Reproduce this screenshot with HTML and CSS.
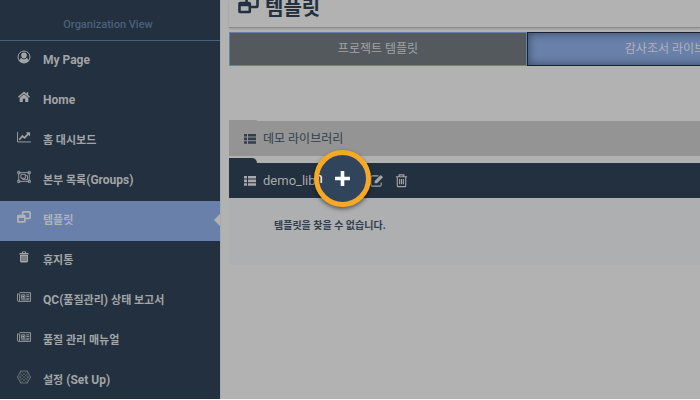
FILE: index.html
```html
<!DOCTYPE html>
<html lang="ko">
<head>
<meta charset="utf-8">
<title>템플릿</title>
<link rel="stylesheet" href="styles.css">
</head>
<body>
<svg class="defs" aria-hidden="true">
  <symbol id="windows" viewBox="0 0 16 14">
    <path d="M6.500 5V2q0-1 1-1H14q1 0 1 1v5.500q0 1-1 1h-4" fill="none" stroke="currentColor" stroke-width="2"/>
    <path fill-rule="evenodd" fill="currentColor" d="M1.500 4.500H8.500a1.500 1.500 0 0 1 1.500 1.500V12A1.500 1.500 0 0 1 8.500 13.500H1.500A1.500 1.500 0 0 1 0 12V6A1.500 1.500 0 0 1 1.500 4.500zM2 8v3.500h6V8z"/>
  </symbol>
  <symbol id="trash" viewBox="0 0 16 16">
    <path d="M2 4h12M5.500 4V2h5v2M3.500 4v9.500q0 1 1 1h7q1 0 1-1V4M6 6.500V12M8 6.500V12M10 6.500V12" fill="none" stroke="currentColor" stroke-width="1.200"/>
  </symbol>
  <symbol id="news" viewBox="0 0 16 14">
    <path d="M3 2h12.400v10H2Q.6 12 .6 10.500V3.500H3V10.500Q3 12 2 12M5 4.500h4v4H5zM10.500 4.500h3.500M10.500 6.500h3.500M10.500 8.500h3.500M5 10.300h9" fill="none" stroke="currentColor"/>
    <path d="M6 5.500h2v2H6z" fill="currentColor"/>
  </symbol>
  <symbol id="list" viewBox="0 0 12 10">
    <path d="M0 0h3v2.600H0zM4 0h8v2.600H4zM0 3.600h3v2.600H0zM4 3.600h8v2.600H4zM0 7.200h3v2.600H0zM4 7.200h8v2.600H4z" fill="currentColor"/>
  </symbol>
</svg>
<div class="app">
  <nav class="sidebar">
    <div class="brand">Organization View</div>
    <a class="item" href="#"><svg class="icon" viewBox="1 1 14 14"><circle cx="8" cy="8" r="6" fill="none" stroke="currentColor"/><path fill="currentColor" d="M8 3.500a2.800 2.800 0 0 1 2.800 3C10.800 8 9.700 9.500 8 9.500S5.200 8 5.200 6.500A2.800 2.800 0 0 1 8 3.500zM5.300 9Q8 11.500 10.700 9q2 .5 2.300 3Q11 14 8 14t-5-2q.3-2.500 2.300-3z"/></svg><span>My Page</span></a>
    <a class="item" href="#"><svg class="icon" viewBox="1 1 14 14"><path fill="currentColor" d="M8 5.200l4.300 3.600V13H9.200V9.800H6.800V13H3.700V8.800zM8 2.500l2.600 2.200V3.200h1.600v2.800L14 7.800l-.9 1L8 4.400 2.900 8.800 2 7.800z"/></svg><span>Home</span></a>
    <a class="item" href="#"><svg class="icon" viewBox="1 1 15 14"><path d="M1.600 2.500v10.800H16" fill="none" stroke="currentColor"/><path d="M3.500 11l3.300-4 2.300 2L13 4.700" fill="none" stroke="currentColor" stroke-width="1.800"/><path d="M10.500 3H15v4.500z" fill="currentColor"/></svg><span><span class="ko">홈 대시보드</span></span></a>
    <a class="item" href="#"><svg class="icon" viewBox="0 1 16 14"><path d="M2 3h12v10H2zM4.500 5h5v4.500h-5zM9.500 6.500h2.500v4.500H6.500V9.500" fill="none" stroke="currentColor"/><path d="M.7 1.600h2.600v2.600H.7zM12.700 1.600h2.600v2.600h-2.600zM.7 11.800h2.600v2.600H.7zM12.700 11.800h2.600v2.600h-2.600z" fill="none" stroke="currentColor" stroke-width=".9"/></svg><span><span class="ko">본부 목록</span>(Groups)</span></a>
    <a class="item active" href="#" aria-current="page"><svg class="icon"><use href="#windows"/></svg><span><span class="ko">템플릿</span></span></a>
    <a class="item" href="#"><svg class="icon" viewBox="1 1 14 14"><path fill="currentColor" fill-rule="evenodd" d="M6 2.500h4V4h2.500v1.500h-9V4H6zM7 3.300V4h2v-.7zM4 6h8v6q0 1.500-1.500 1.500h-5Q4 13.500 4 12zM5.700 7v5h.6V7zM7.700 7v5h.6V7zM9.700 7v5h.6V7z"/></svg><span><span class="ko">휴지통</span></span></a>
    <a class="item" href="#"><svg class="icon"><use href="#news"/></svg><span>QC(<span class="ko">품질관리</span>) <span class="ko">상태 보고서</span></span></a>
    <a class="item" href="#"><svg class="icon"><use href="#news"/></svg><span><span class="ko">품질 관리 매뉴얼</span></span></a>
    <a class="item" href="#"><svg class="icon dim" viewBox="1 1 14 14"><path d="M4.700 2h6.600L14.600 8l-3.300 6H4.700L1.400 8z" fill="none" stroke="currentColor" stroke-width=".9"/><path d="M4.500 2L8 5l3.500-3L12 8l-.5 6L8 11l-3.500 3L4 8zM1 8h3l4-3 4 3h3M4 8l4 3 4-3M5 5l6 6M11 5l-6 6" fill="none" stroke="currentColor" stroke-width=".5"/></svg><span><span class="ko">설정</span> (Set Up)</span></a>
  </nav>
  <main class="main">
    <header class="page-head"><svg class="head-icon"><use href="#windows"/></svg><h1>템플릿</h1></header>
    <div class="tabs">
      <button class="tab" type="button">프로젝트 템플릿</button>
      <button class="tab selected" type="button">감사조서 라이브러리</button>
    </div>
    <section class="library">
      <div class="row light"><svg class="list"><use href="#list"/></svg><span>데모 라이브러리</span></div>
    </section>
    <section class="library">
      <div class="row dark">
        <svg class="list"><use href="#list"/></svg><span>demo_lib</span>
        <div class="actions">
          <button class="tool" type="button" aria-label="편집"><svg viewBox="0 0 16 16"><path d="M10 3H3.500Q2 3 2 4.500v8Q2 14 3.500 14h8q1.500 0 1.500-1.500V10" fill="none" stroke="currentColor" stroke-width="1.200"/><path d="M6 8.500L12.500 2 15 4.500 8.500 11H6z" fill="currentColor"/></svg></button>
          <button class="tool" type="button" aria-label="삭제"><svg><use href="#trash"/></svg></button>
        </div>
        <button class="spotlight" type="button" aria-label="추가"><span class="peek">n</span><svg viewBox="0 0 16 16"><path d="M6.300 1h3.400v5.300H15v3.400H9.700V15H6.300V9.700H1V6.300h5.300z" fill="#fff"/></svg></button>
      </div>
      <p class="empty">템플릿을 찾을 수 없습니다.</p>
    </section>
  </main>
</div>
</body>
</html>
```
FILE: styles.css
```css
* { box-sizing: border-box; }
body {
  margin: 0;
  background: #fff;
  font-family: Roboto, "Noto Sans CJK KR", sans-serif;
  font-size: 12px;
  overflow: hidden;
}
button { font: inherit; padding: 0; border: 0; }
svg { display: block; flex: none; }
.defs { position: absolute; width: 0; height: 0; }
.app {
  display: flex;
  height: calc(100vh - 1px);
  background: #b2b2b2;
  overflow: hidden;
}
.sidebar {
  flex: 0 0 220px;
  background: #22303f;
  color: #a3a4a5;
}
.brand {
  height: 41px;
  padding: 16px 4px 0 0;
  border-bottom: 1px solid #48627b;
  color: #4c607c;
  font-size: 11px;
  font-weight: 500;
  line-height: 17px;
  text-align: center;
}
.item {
  display: flex;
  gap: 12px;
  height: 40px;
  padding: 7px 0 0 17px;
  color: inherit;
  font-weight: 700;
  line-height: 24px;
  text-decoration: none;
  white-space: nowrap;
}
.ko { font-size: 11px; }
.icon { width: 14px; height: 14px; margin-top: 2px; }
.dim { opacity: 0.6; }
.item.active {
  position: relative;
  background: #6980ab;
  color: #b2b2b2;
}
.item.active::after {
  content: "";
  position: absolute;
  right: 0;
  top: 13px;
  border: solid transparent;
  border-width: 6px 6px 6px 0;
  border-right-color: #b2b2b2;
}
.main {
  flex: 1;
  min-width: 0;
  padding-left: 8px;
  border-left: 1px solid #a6a8aa;
  overflow: hidden;
}
.page-head {
  display: flex;
  align-items: flex-end;
  gap: 6px;
  height: 28px;
  padding: 0 0 13px 9px;
  border-bottom: 1px solid #8b8b8b;
  box-shadow: 0 1px 2px #9a9a9a;
  color: #22303f;
}
.head-icon { width: 21px; height: 18px; }
h1 { margin: 0 0 -6px; font-size: 20px; line-height: 24px; }
.tabs {
  display: grid;
  grid-template-columns: repeat(2, 298px);
  margin: 4px 0 55px;
}
.tab {
  height: 34px;
  padding-bottom: 3px;
  border: 1px solid #6980ab;
  background: #53595d;
  color: #a3a4a5;
}
.tab.selected {
  border-color: #19232e;
  background: #6980ab;
  box-shadow: inset 0 0 10px #34465f;
  color: #b2b2b2;
}
.library { margin: 0 0 7px; }
.row {
  position: relative;
  display: flex;
  align-items: center;
  gap: 7px;
  height: 35px;
  padding-left: 15px;
}
.row::before {
  content: "";
  position: absolute;
  left: 0;
  bottom: 100%;
  width: 28px;
  height: 5px;
  border-radius: 0 8px 0 0;
  background: inherit;
}
.light { background: #949494; color: #303e4d; }
.light::before { height: 1px; }
.dark { background: #22303f; color: #a8a9aa; }
.row > span { line-height: 20px; font-size: 13px; }
.row.light > span { font-size: 12px; }
.list { width: 12px; height: 10px; }
.actions { position: absolute; left: 140px; top: 10px; display: flex; gap: 10px; }
.tool { width: 15px; height: 15px; background: none; color: #a3a4a5; }
.tool svg { width: 15px; height: 15px; }
.spotlight {
  position: absolute;
  left: 85px;
  top: -13px;
  display: grid;
  place-items: center;
  width: 57px;
  height: 57px;
  border: 5px solid #f9a825;
  border-radius: 50%;
  background: #30455c;
  box-shadow: 0 2px 4px #00000080;
  overflow: hidden;
}
.spotlight svg { width: 17px; height: 17px; }
.peek {
  position: absolute;
  left: -4px;
  top: 13px;
  color: #fff;
  font-size: 14px;
  line-height: 20px;
}
.empty {
  height: 67px;
  margin: 0;
  padding: 18px 45px;
  background: #adafb1;
  color: #303e4d;
  font-size: 10px;
  font-weight: 700;
  line-height: 20px;
}
```
